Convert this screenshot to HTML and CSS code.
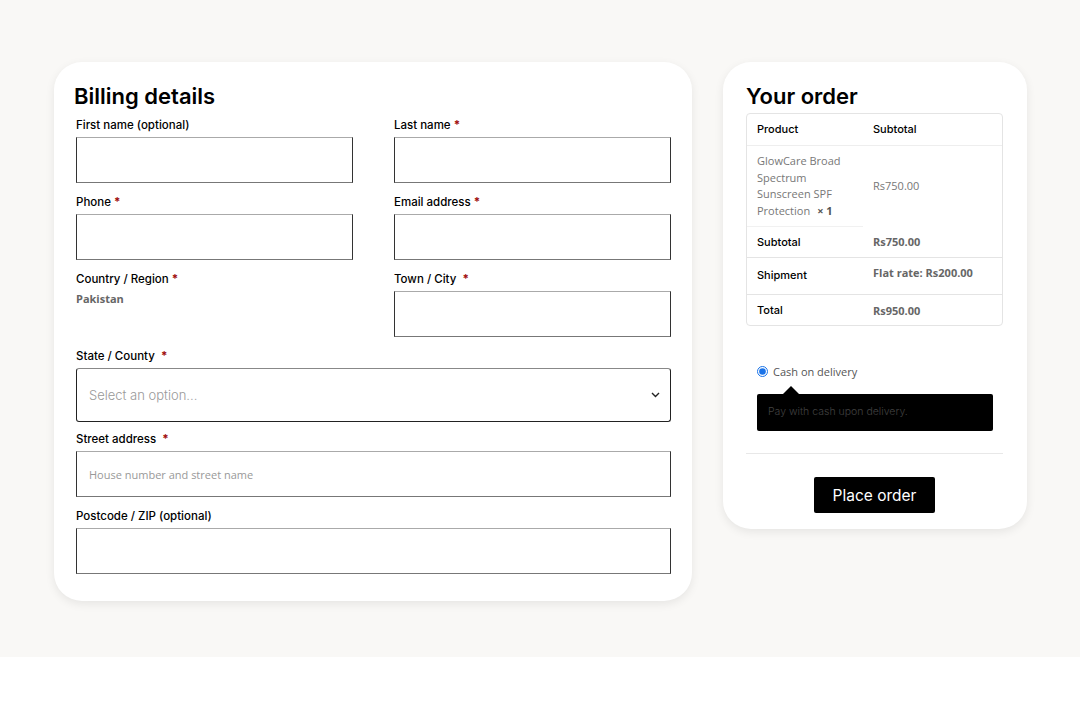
FILE: index.html
```html
<!DOCTYPE html>
<html lang="en">
<head>
    <meta charset="UTF-8">
    <meta name="viewport" content="width=device-width, initial-scale=1.0">
    <title>Checkout</title>
    <link rel="stylesheet" href="styles.css">
</head>
<body>
    <div class="page">
        <div class="checkout">
            <div class="card billing">
                <h2>Billing details</h2>
                <div class="fields">
                    <div class="field">
                        <label>First name (optional)</label>
                        <input type="text">
                    </div>
                    <div class="field">
                        <label>Last name <span class="req">*</span></label>
                        <input type="text">
                    </div>
                    <div class="field">
                        <label>Phone <span class="req">*</span></label>
                        <input type="text">
                    </div>
                    <div class="field">
                        <label>Email address <span class="req">*</span></label>
                        <input type="text">
                    </div>
                    <div class="field">
                        <label>Country / Region <span class="req">*</span></label>
                        <p class="country">Pakistan</p>
                    </div>
                    <div class="field">
                        <label>Town / City &nbsp;<span class="req">*</span></label>
                        <input type="text">
                    </div>
                    <div class="field wide">
                        <label>State / County &nbsp;<span class="req">*</span></label>
                        <div class="select">
                            <span>Select an option...</span>
                            <svg width="9" height="6" viewBox="0 0 9 6"><path d="M1 1l3.5 3.5L8 1" fill="none" stroke="#222" stroke-width="1.4"/></svg>
                        </div>
                    </div>
                    <div class="field wide street">
                        <label>Street address &nbsp;<span class="req">*</span></label>
                        <input type="text" placeholder="House number and street name">
                    </div>
                    <div class="field wide">
                        <label>Postcode / ZIP (optional)</label>
                        <input type="text">
                    </div>
                </div>
            </div>

            <div class="card order">
                <h2>Your order</h2>
                <table class="order-table">
                    <colgroup>
                        <col class="col-name">
                        <col>
                    </colgroup>
                    <tr class="head">
                        <th>Product</th>
                        <th>Subtotal</th>
                    </tr>
                    <tr class="item">
                        <td>GlowCare Broad Spectrum Sunscreen SPF Protection<strong class="qty">× 1</strong></td>
                        <td>Rs750.00</td>
                    </tr>
                    <tr class="sub">
                        <th>Subtotal</th>
                        <td><strong>Rs750.00</strong></td>
                    </tr>
                    <tr class="ship">
                        <th>Shipment</th>
                        <td><strong>Flat rate: Rs200.00</strong></td>
                    </tr>
                    <tr class="total">
                        <th>Total</th>
                        <td><strong>Rs950.00</strong></td>
                    </tr>
                </table>

                <div class="payment">
                    <label class="method">
                        <input type="radio" checked>
                        Cash on delivery
                    </label>
                    <div class="payment-box">Pay with cash upon delivery.</div>
                </div>

                <div class="place">
                    <button class="place-order">Place order</button>
                </div>
            </div>
        </div>
    </div>
</body>
</html>
```

FILE: styles.css
```css
body {
    margin: 0;
    padding: 0;
    background-color: #fff;
    font-family: "Inter", "Open Sans", sans-serif;
    color: #111;
}

.page {
    background-color: #f9f8f6;
    height: 657px;
    padding-top: 62px;
    box-sizing: border-box;
}

.checkout {
    display: flex;
    align-items: flex-start;
    gap: 31px;
    margin-left: 54px;
}

.card {
    background-color: #fff;
    border-radius: 28px;
    box-shadow: 0 3px 10px rgba(0, 0, 0, 0.08);
    box-sizing: border-box;
}

h2 {
    font-size: 22px;
    font-weight: 600;
    line-height: 26px;
    margin: 0;
    color: #000;
}

.billing {
    width: 638px;
    padding: 21px 21px 27px 22px;
}

.billing h2 {
    margin: 0 0 8px -2px;
}

.fields {
    display: grid;
    grid-template-columns: 277px 277px;
    column-gap: 41px;
    row-gap: 11px;
}

.field.wide {
    grid-column: 1 / 3;
}

.field.street {
    margin-top: -2px;
}

.field label {
    display: block;
    font-size: 11.5px;
    font-weight: 500;
    line-height: 17px;
    margin-bottom: 3px;
    color: #000;
}

.req {
    color: #a10f0f;
    font-weight: 700;
}

.field input {
    display: block;
    width: 100%;
    height: 46px;
    box-sizing: border-box;
    margin: 0;
    border: 1px solid #333;
    border-top-color: #aaa;
    border-bottom-color: #777;
    padding: 0 12px;
    font-family: "Open Sans", sans-serif;
    font-size: 11px;
    background: #fff;
}

.field input::placeholder {
    color: #999;
}

.country {
    margin: 2px 0 0;
    font-family: "Open Sans", sans-serif;
    font-size: 11px;
    font-weight: 700;
    color: #666;
}

.select {
    height: 54px;
    box-sizing: border-box;
    border: 1px solid #222;
    border-top-color: #888;
    border-radius: 3px;
    display: flex;
    align-items: center;
    justify-content: space-between;
    padding: 0 10px 0 12px;
    font-size: 13px;
    color: #999;
    font-weight: 300;
}

.order {
    width: 304px;
    padding: 21px 24px 16px 23px;
}

.order h2 {
    margin-bottom: 4px;
}

.order-table {
    width: 100%;
    table-layout: fixed;
    border-collapse: separate;
    border-spacing: 0;
    border: 1px solid #e4e4e4;
    border-radius: 4px;
    font-size: 11px;
}

.col-name {
    width: 116px;
}

.order-table th,
.order-table td {
    text-align: left;
    padding: 7.5px 10px;
    line-height: 15px;
    vertical-align: middle;
}

.order-table th {
    font-weight: 500;
    color: #000;
}

.order-table td {
    font-family: "Open Sans", sans-serif;
    color: #777;
}

.order-table td strong {
    color: #666;
}

.order-table .head th {
    padding: 8px 10px;
}

.order-table .item td {
    border-top: 1px solid #eee;
    padding: 7px 10px;
    line-height: 16.5px;
}

.order-table .item td .qty {
    color: #555;
    margin-left: 7px;
}

.order-table .sub th {
    border-top: 1px solid #f1f1f1;
}

.order-table .ship th,
.order-table .ship td,
.order-table .total th,
.order-table .total td {
    border-top: 1px solid #e4e4e4;
}

.order-table .ship th {
    padding: 10px 10px 11px;
}

.order-table .ship td {
    vertical-align: top;
    padding-top: 7px;
}

.payment {
    padding: 38px 10px 22px 11px;
    border-bottom: 1px solid #e8e8e8;
}

.method {
    display: flex;
    align-items: center;
    gap: 5px;
    font-family: "Open Sans", sans-serif;
    font-size: 11px;
    color: #555;
}

.method input {
    margin: 0;
    width: 11px;
    height: 11px;
    accent-color: #1a73e8;
}

.payment-box {
    position: relative;
    margin-top: 15px;
    background-color: #000;
    border-radius: 2px;
    height: 37px;
    box-sizing: border-box;
    padding: 11px 11px;
    font-size: 10.5px;
    font-weight: 300;
    color: #404040;
}

.payment-box::before {
    content: "";
    position: absolute;
    top: -8px;
    left: 26px;
    border: 8px solid transparent;
    border-top: 0;
    border-bottom-color: #000;
}

.place {
    text-align: center;
    padding-top: 23px;
}

.place-order {
    background-color: #000;
    color: #fff;
    border: none;
    border-radius: 2px;
    width: 121px;
    height: 36px;
    font-family: "Inter", sans-serif;
    font-size: 15.5px;
    font-weight: 400;
    cursor: pointer;
}
```
